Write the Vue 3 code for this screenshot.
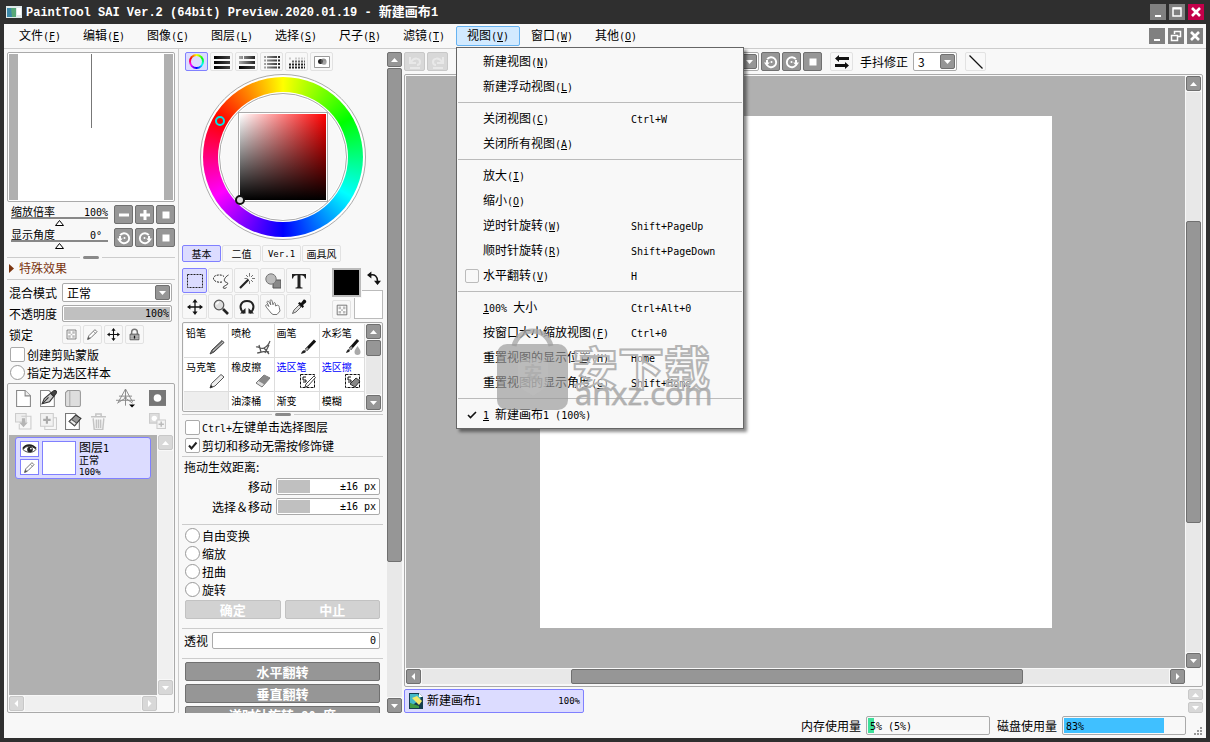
<script setup>
import { h } from 'vue'

/* Mixed text: Latin runs get a half-width face, "_X" marks an underlined mnemonic. */
const T = (props) => {
  const parts = props.t.split(/([\x20-\x7e°]+)/).filter(Boolean)
  return h('span', { class: 'tx' }, parts.map((p) => {
    if (!/^[\x20-\x7e°]/.test(p)) return p
    const bits = p.split(/(_.)/).filter(Boolean)
    return h('span', { class: 'la' }, bits.map((b) => (b[0] === '_' ? h('u', b[1]) : b)))
  }))
}
T.props = ['t']

const arrows = {
  up: '<path d="M4 10h7L7.500 6z" fill="#fff"/>',
  down: '<path d="M4 6h7L7.500 10z" fill="#fff"/>',
  left: '<path d="M9 4v7L5.500 7.500z" fill="#fff"/>',
  right: '<path d="M6 4v7l3.500-3.500z" fill="#fff"/>',
}

const checker = '<path d="M2.500 2.500h11v11h-11z" fill="#fff" stroke="#666"/><path d="M4 4h3v3H4zM9 4h3v3H9zM7 7h2v2H7zM4 9h3v3H4zM9 9h3v3H9z" fill="#bbb"/>'
const pencil = '<path d="M2 14l1.500-4.500L11 2l2.500 2.500L6 12z" fill="#fff" stroke="#555"/><path d="M2 14l1-3 2 2zM9 4l3 3" fill="#333" stroke="#777" stroke-width=".8"/>'
const move = '<path d="M8 2v12M2 8h12" stroke="#111" stroke-width="1.300"/><path d="M8 0l2.600 3.400H5.400zM8 16l2.600-3.400H5.400zM0 8l3.400-2.600v5.200zM16 8l-3.400-2.600v5.200z" fill="#111"/>'
const icons = {
  minus: '<path d="M3 6.500h10v3H3z" fill="#fff"/>',
  plus: '<path d="M3 6.500h10v3H3zM6.500 3h3v10h-3z" fill="#fff"/>',
  stop: '<path d="M4.500 4.500h7v7h-7z" fill="#fff"/>',
  ccw: '<path d="M4.200 5.200A5 5 0 1 1 4 11" fill="none" stroke="#fff" stroke-width="1.900"/><path d="M1 8.500h5.800L3.500 12z M3 8.500V6h2v3z" fill="#fff"/><circle cx="8.500" cy="8" r="1" fill="#fff"/>',
  cw: '<path d="M11.800 5.200A5 5 0 1 0 12 11" fill="none" stroke="#fff" stroke-width="1.900"/><path d="M15 8.500H9.200l3.300 3.500z M13 8.500V6h-2v3z" fill="#fff"/><circle cx="7.500" cy="8" r="1" fill="#fff"/>',
  undo: '<path d="M3 3v6h6M4 8c3-5 9-4 9 0 0 2-1.500 3-3 3M3 14h10" fill="none" stroke="#e8e8e8" stroke-width="2"/>',
  redo: '<path d="M13 3v6H7M12 8c-3-5-9-4-9 0 0 2 1.500 3 3 3M3 14h10" fill="none" stroke="#e8e8e8" stroke-width="2"/>',
  swapH: '<path d="M1 4.500L5 1v2h10v3H5v2zM15 11.500L11 8v2H1v3h10v2z" fill="#111"/>',
  line: '<path d="M1.500 1.500l13 13" stroke="#111" stroke-width="1.300"/>',
  checker, pencil, move,
  lock: '<path d="M4.500 8V5a3.500 3.500 0 0 1 7 0v3" fill="none" stroke="#777" stroke-width="1.800"/><path d="M2.500 7.500h11v7h-11z" fill="#999" stroke="#555"/><path d="M3 10h10M3 12.500h10" stroke="#ccc"/><path d="M7.200 9.500h1.600v3.500H7.200z" fill="#111"/>',
  bars: '<path d="M0 2h16v3H0zM0 7h16v3H0zM0 12h16v3H0z" fill="url(#gk)"/>',
  bars2: '<path d="M0 2h4v3H0zM5 2h11v3H5z" fill="url(#gl)"/><path d="M0 7h16v3H0z" fill="url(#gl)"/><path d="M0 12h16v3H0z" fill="url(#gk)"/>',
  bars3: '<path d="M0 2h2v2H0zM3 2h10v2H3zM14 2h2v2h-2zM0 5.500h2v2H0zM3 5.500h10v2H3zM14 5.500h2v2h-2zM0 9h2v2H0zM3 9h10v2H3zM14 9h2v2h-2zM0 12.500h2v2H0zM3 12.500h10v2H3zM14 12.500h2v2h-2z" fill="url(#gl)"/>',
  dots: '<path d="M0 13.500h17M0 10.500h17" stroke="#222" stroke-width="2" stroke-dasharray="2 1"/><path d="M3 7.500h14" stroke="#666" stroke-width="2" stroke-dasharray="2 1"/><path d="M6 4.500h11M0 4.500h2" stroke="#ccc" stroke-width="2" stroke-dasharray="2 1"/>',
  blob: '<path d="M.5 2.500h15v11H.500z" fill="#fff" stroke="#999"/><circle cx="6.500" cy="7.500" r="2.500" fill="#222"/><circle cx="9.500" cy="7.500" r="3" fill="#666" opacity=".7"/><circle cx="10.500" cy="9" r="2" fill="#aaa" opacity=".7"/>',
  marquee: '<path d="M.5 1.500h15v13H.500z" fill="none" stroke="#222" stroke-dasharray="2 1"/>',
  lasso: '<path d="M9 9C4 10 0 7.500.500 5 1 1.500 9 1 11 3.500" fill="none" stroke="#222" stroke-dasharray="2 1"/><path d="M15.500 2c-2 1-5 4-4 6s4 1 3 3-3 1-4 3 2 1.500 3 .5" fill="none" stroke="#333"/>',
  wand: '<path d="M1 15L9.500 6.500" stroke="#222" stroke-width="2.200"/><path d="M10.500 0v3.500M10.500 8v3M5.500 5.500h3M13 5.500h3M7 2l2 2M14 2l-2 2M14 9l-2-2" stroke="#777"/>',
  shapes: '<path d="M8 7h8v8H8z" fill="#888" stroke="#555"/><circle cx="6" cy="6" r="5.200" fill="#bbb" stroke="#777"/>',
  type: '<path d="M1 1h14v4.500h-1C13.500 3 12.500 2.200 9.500 2.200v11c0 1 .8 1.300 2 1.300v1h-7v-1c1.200 0 2-.3 2-1.300v-11C3.500 2.200 2.500 3 2 5.500H1z" fill="#222"/>',
  zoom: '<path d="M10 10l5 5" stroke="#222" stroke-width="2.600"/><circle cx="6" cy="6" r="4.800" fill="#ddd" stroke="#555" stroke-width="1.200"/><path d="M3.500 5.500A3 3 0 0 1 6 3.200" stroke="#fff" stroke-width="1.400" fill="none"/>',
  rotate: '<path d="M5 14C-1 9 1.500 2 8 2s9 7 3 12" fill="none" stroke="#222" stroke-width="2"/><path d="M1 14.500h5.500V9zM15 14.500H9.500V9z" fill="#222"/>',
  hand: '<path d="M6 14C4 11 1 8.500.500 6.500c.5-1.500 2-.5 3.500 1L2 3.500C1.700 2 3.300 1.700 4 3l1.800 3L5 1.800C5 .5 6.800.500 7 1.800l1 4 .5-1.600c.6-1.200 2-.6 1.800.6L10.500 7l1.800-.8c1-.2 2 .8 2 2.300L15 12l-3 3.500H8z" fill="#fff" stroke="#777"/>',
  dropper: '<path d="M1.500 14.500L3 11l5-5 2 2-5 5z" fill="#ddd" stroke="#666"/><path d="M7 4.500L8.500 3l1.500 1L12.500.800c1.200-1 3.500 1 2.500 2.700L12 6l1 1.500L11.500 9z" fill="#111"/>',
  swap: '<path d="M4 4.500c5-1 8 2 8 7" fill="none" stroke="#111" stroke-width="1.800"/><path d="M0 4.500L5 .5v8zM12 16L8 11h8z" fill="#111"/>',
  bPencil: '<path d="M1 15l2-4L13 1.500l2 2L5 13z" fill="#777" stroke="#444"/><path d="M4 12l10-9" stroke="#ccc"/>',
  bAir: '<path d="M1 8c4-1 4 3 8 1s5-4 6-7M4 6l2 7M2 14c4 0 7-3 12-1M9 9l5 6M10 14l4-8" stroke="#555" fill="none" stroke-width="1.200"/>',
  bBrush: '<path d="M1 15c1-3 2-4 4-4l1 1c0 2-3 2.500-5 3z" fill="#222"/><path d="M6 11L15 1.500" stroke="#111" stroke-width="3"/><path d="M5 12l3-3" stroke="#999" stroke-width="2"/>',
  bWater: '<path d="M1 14c1-3 2-4 3-4l1 1c0 2-2 2.500-4 3z" fill="#222"/><path d="M5 10l8-9" stroke="#111" stroke-width="3"/><path d="M4 11l3-3" stroke="#999" stroke-width="2"/><path d="M12.500 7c2 3 3 4 3 6a3 3 0 0 1-6 0c0-2 1-3 3-6z" fill="#aaa"/>',
  bMarker: '<path d="M1 15l1.500-4.500L12 1.500l3 2.500L6 13z" fill="#eee" stroke="#555"/><path d="M1 15l1-3 2 2z" fill="#222"/>',
  bEraser: '<path d="M1 10l8-8 6 3-8 9z" fill="#ddd" stroke="#777"/><path d="M3.500 8L9 2l6 3-5.500 6.500z" fill="#888"/>',
  bSelPen: '<path d="M.5 1.500h14v13H.500z" fill="none" stroke="#111" stroke-dasharray="3 1"/><path d="M6 4H3v3h3v2H3" fill="none" stroke="#111"/><path d="M5 14l1-3 8-8 1.500 1.500L8 13z" fill="#fff" stroke="#444"/>',
  bSelEr: '<path d="M.5 1.500h14v13H.500z" fill="none" stroke="#111" stroke-dasharray="3 1"/><path d="M6 4H3v3h3v2H3" fill="none" stroke="#111"/><path d="M5 11l6-6 4 3-5 6z" fill="#888" stroke="#333"/>',
  page: '<path d="M1.500.500h8l5 5v10h-13z" fill="#fff" stroke="#888"/><path d="M9.500.500v5h5" fill="#eee" stroke="#888"/>',
  pagePen: '<path d="M.5.500h8l5 5v10H.500z" fill="#fff" stroke="#888"/><path d="M2 13l2-5 6-5 3 3-4 5z" fill="#ccc" stroke="#333"/><path d="M2.500 12.500L8 7M10 3l4-3 2 2-3 4z" fill="#444" stroke="#333"/>',
  folder: '<path d="M.5 2.500l2-2h10.500a1.500 1.500 0 0 1 1.500 1.500v12a1.500 1.500 0 0 1-1.500 1.500H2a1.500 1.500 0 0 1-1.500-1.500z" fill="#ddd" stroke="#999"/><path d="M4.500 1v14" stroke="#aaa"/>',
  persp: '<path d="M8 0v14M0 9.500h16M8 0L2 11M8 0l6 11M1 12l8-5M14 12L7 7M2.500 6h11" stroke="#888" stroke-width=".8" fill="none"/><path d="M11 13h5l-2.500 2.500z" fill="#000"/>',
  mask: '<path d="M0 0h16v15H0z" fill="#777"/><circle cx="8" cy="7.500" r="3.600" fill="#fff"/>',
  down: '<path d="M.5.500h10v8H.500z" fill="#eee" stroke="#ccc"/><path d="M6 3h9v12H4v-5" fill="none" stroke="#ccc"/><path d="M6.500 5h3v4H12l-4 4.500L4 9h2.500z" fill="#b5b5b5"/>',
  addSel: '<path d="M4.500 4.500h11v11h-11z" fill="none" stroke="#ccc"/><path d="M.500.500h12v12H.500z" fill="#f2f2f2" stroke="#ccc"/><path d="M6.500 3v7M3 6.500h7" stroke="#aaa" stroke-width="2"/>',
  pageEr: '<path d="M.5.500h9l4 4v11H.500z" fill="#fff" stroke="#777"/><path d="M4 8l6-6 5 3-6 7z" fill="#999" stroke="#333"/><path d="M4 8l2-2 5 3.500-2 2.500z" fill="#eee" stroke="#555"/>',
  trash: '<path d="M1 3.500h14M5.500 3V1h5v2M3 5l1 10.500h8L13 5M6 6v8M8 6v8M10 6v8" fill="none" stroke="#c4c4c4" stroke-width="1.400"/>',
  addMask: '<path d="M.5.500h9v9H.500z" fill="#ddd" stroke="#ccc"/><circle cx="5" cy="5" r="2.500" fill="#fff"/><path d="M7.500 6.500h8v8h-8z" fill="#f4f4f4" stroke="#ccc"/><path d="M11.500 8v5M9 10.500h5" stroke="#bbb" stroke-width="1.400"/>',
  eye: '<path d="M1 8c3-4.500 10-4.500 14 0-3 4-10 4-14 0z" fill="#fff" stroke="#333"/><path d="M1 7c3-5 10-5 14 0" fill="none" stroke="#222" stroke-width="1.800"/><circle cx="8.500" cy="8" r="3" fill="#222"/><circle cx="9.500" cy="7" r=".9" fill="#fff"/>',
  app: '<path d="M0 2h16v12H0z" fill="#dfe9ea"/><path d="M1 4h9v9H1z" fill="#3b88a8"/><path d="M5 4h5v9H6z" fill="#58a878"/><path d="M11 4h4v7h-4z" fill="#fff"/>',
  doc: '<path d="M1 0h10l4 4v12H1z" fill="#143c50"/><path d="M2 1h8l3 4-8 7-3-2z" fill="#45b9c8"/><path d="M4 5l5-2 5 5-3 4z" fill="#f3e96a"/><path d="M2 10l9 3v2H2z" fill="#3f9a45"/><path d="M11 0v4h4z" fill="#fff"/>',
  wmin: '<path d="M5 11h6v2H5z" fill="#fff"/>',
  wmax: '<path d="M4 4h8v8H4z" fill="none" stroke="#fff" stroke-width="1.500"/><path d="M4 3.500h8v2H4z" fill="#fff"/>',
  wres: '<path d="M6.500 6V3.500h6v5H10" fill="none" stroke="#fff" stroke-width="1.500"/><path d="M3.500 7.500h6v5h-6z" fill="none" stroke="#fff" stroke-width="1.500"/>',
  wclose: '<path d="M4 4l8 8M12 4l-8 8" stroke="#fff" stroke-width="2.600"/>',
}
const Ico = (props) => h('svg', {
  class: 'ico', viewBox: '0 0 16 16', width: props.s || 16, height: props.s || 16, 'aria-hidden': 'true', innerHTML: icons[props.n],
})
Ico.props = ['n', 's']

const Arrow = (props) => h('svg', { class: 'ico', viewBox: '0 0 15 15', width: 15, height: 15, 'aria-hidden': 'true', innerHTML: arrows[props.d] })
Arrow.props = ['d']

const Scroll = (props) => {
  const v = props.dir === 'v'
  const thumb = props.size
    ? h('div', { class: 'sb-thumb', style: v ? { top: props.at + '%', height: props.size + '%' } : { left: props.at + '%', width: props.size + '%' } })
    : null
  return h('div', { class: ['sb', v ? 'sb-v' : 'sb-h', { 'sb-off': !props.size }] }, [
    h('button', { class: 'sb-btn', type: 'button', 'aria-label': v ? '上' : '左' }, h(Arrow, { d: v ? 'up' : 'left' })),
    h('div', { class: 'sb-track' }, thumb),
    h('button', { class: 'sb-btn', type: 'button', 'aria-label': v ? '下' : '右' }, h(Arrow, { d: v ? 'down' : 'right' })),
  ])
}
Scroll.props = ['dir', 'at', 'size']

const menus = ['文件(_F)', '编辑(_E)', '图像(_C)', '图层(_L)', '选择(_S)', '尺子(_R)', '滤镜(_T)', '视图(_V)', '窗口(_W)', '其他(_O)']
const groups = [
  [{ t: '新建视图(_N)' }, { t: '新建浮动视图(_L)' }],
  [{ t: '关闭视图(_C)', k: 'Ctrl+W' }, { t: '关闭所有视图(_A)' }],
  [{ t: '放大(_I)' }, { t: '缩小(_O)' }, { t: '逆时针旋转(_W)', k: 'Shift+PageUp' }, { t: '顺时针旋转(_R)', k: 'Shift+PageDown' }, { t: '水平翻转(_V)', k: 'H', box: true }],
  [{ t: '_100% 大小', k: 'Ctrl+Alt+0' }, { t: '按窗口大小缩放视图(_F)', k: 'Ctrl+0' }, { t: '重置视图的显示位置(_H)', k: 'Home' }, { t: '重置视图的显示角度(_G)', k: 'Shift+Home' }],
  [{ t: '_1 新建画布1 (100%)', check: true }],
]
const sliders = [
  { id: 'zoom', t: '缩放倍率', v: '100%', b: ['minus', 'plus', 'stop'] },
  { id: 'angle', t: '显示角度', v: '0° ', b: ['ccw', 'cw', 'stop'] },
]
const modes = ['bars', 'bars2', 'bars3', 'dots', 'blob']
const tabs = ['基本', '二值', 'Ver.1', '画具风']
const tools = ['marquee', 'lasso', 'wand', 'shapes', 'type', 'move', 'zoom', 'rotate', 'hand', 'dropper']
const brushes = [
  ['铅笔', 'bPencil'], ['喷枪', 'bAir'], ['画笔', 'bBrush'], ['水彩笔', 'bWater'],
  ['马克笔', 'bMarker'], ['橡皮擦', 'bEraser'], ['选区笔', 'bSelPen', 1], ['选区擦', 'bSelEr', 1],
  ['', ''], ['油漆桶', ''], ['渐变', ''], ['模糊', ''],
]
const transforms = ['自由变换', '缩放', '扭曲', '旋转']
</script>

<template>
  <div class="window">
    <svg class="defs" width="0" height="0" aria-hidden="true">
      <linearGradient id="gk"><stop offset="0" stop-color="#000" /><stop offset="1" stop-color="#444" /></linearGradient>
      <linearGradient id="gl"><stop offset="0" stop-color="#aaa" /><stop offset="1" stop-color="#222" /></linearGradient>
    </svg>
    <header class="title">
      <Ico n="app" />
      <h1><T t="PaintTool SAI Ver.2 (64bit) Preview.2020.01.19 - 新建画布1" /></h1>
      <div class="wbtns">
        <button type="button" aria-label="最小化"><Ico n="wmin" /></button>
        <button type="button" aria-label="最大化"><Ico n="wmax" /></button>
        <button type="button" class="red" aria-label="关闭"><Ico n="wclose" /></button>
      </div>
    </header>

    <div class="app">
      <nav class="menubar">
        <div v-for="m in menus" :key="m" class="mwrap">
          <button type="button" class="mitem" :class="{ open: m === '视图(_V)' }"><T :t="m" /></button>
          <div v-if="m === '视图(_V)'" class="menu" role="menu">
            <div v-for="(g, i) in groups" :key="i" class="group">
              <button v-for="it in g" :key="it.t" type="button" class="row" role="menuitem">
                <span class="mark">
                  <span v-if="it.box" class="mbox"></span>
                  <svg v-if="it.check" width="10" height="8" viewBox="0 0 10 8"><path d="M1 4l2.500 2.500L9 1" fill="none" stroke="#111" stroke-width="1.600" /></svg>
                </span>
                <T class="mtext" :t="it.t" />
                <T v-if="it.k" :t="it.k" />
              </button>
            </div>
            <svg class="wm" width="216" height="84" viewBox="0 0 216 84" aria-hidden="true">
              <path d="M17 18C22-2 49-2 54 18" fill="none" stroke="#a9a9a9" stroke-width="5" opacity=".8" />
              <rect x="0" y="16" width="71" height="66" rx="10" fill="#999" opacity=".68" />
              <path d="M21 34l15-4 15 4v22c-3 6-10 8-15 12-5-4-12-6-15-12z" fill="#bcbcbc" opacity=".6" />
              <text x="27" y="52" class="wm-s">安</text>
              <text x="75" y="57" class="wm-b">安下载</text>
              <text x="78" y="77" class="wm-l">anxz.com</text>
            </svg>
          </div>
        </div>
        <div class="wbtns sub">
          <button type="button" aria-label="最小化视图"><Ico n="wmin" /></button>
          <button type="button" aria-label="还原视图"><Ico n="wres" /></button>
          <button type="button" aria-label="关闭视图"><Ico n="wclose" /></button>
        </div>
      </nav>

      <div class="work">
        <aside class="left">
          <div class="preview"><div class="sheet"><i></i></div></div>
          <div class="sliders">
            <div v-for="s in sliders" :key="s.id" class="srow">
              <div class="slider">
                <label :for="s.id"><span>{{ s.t }}</span><T :t="s.v" /></label>
                <input :id="s.id" type="range" value="50" />
              </div>
              <button v-for="b in s.b" :key="b" type="button" class="gbtn" :aria-label="s.t + b"><Ico :n="b" /></button>
            </div>
          </div>
          <div class="split"><i></i></div>
          <h2 class="fx"><svg width="5" height="9" viewBox="0 0 5 9"><path d="M0 0l5 4.500L0 9z" fill="#7b3510" /></svg>特殊效果</h2>
          <div class="props">
            <label for="mode">混合模式</label>
            <span class="combo"><select id="mode"><option>正常</option></select><span class="cb"><Arrow d="down" /></span></span>
            <label for="opacity">不透明度</label>
            <input id="opacity" class="field full" value="100%" />
            <span>锁定</span>
            <div class="locks">
              <button v-for="l in ['checker', 'pencil', 'move', 'lock']" :key="l" type="button" class="tbtn" :aria-label="l"><Ico :n="l" s="13" /></button>
            </div>
          </div>
          <label class="opt"><input type="checkbox" />创建剪贴蒙版</label>
          <label class="opt"><input type="radio" name="sample" />指定为选区样本</label>
          <section class="layers">
            <div class="ltools">
              <button v-for="(l, i) in ['page', 'pagePen', 'folder', '', 'persp', 'mask', 'down', 'addSel', 'pageEr', 'trash', '', 'addMask']" :key="i" type="button" :class="'l-' + l" :aria-label="l || '空'" :disabled="!l">
                <Ico v-if="l" :n="l" :s="l === 'persp' ? 19 : 17" />
              </button>
            </div>
            <div class="lbody">
              <div class="list">
                <div class="layer">
                  <div class="eyes">
                    <button type="button" aria-label="显示"><Ico n="eye" s="15" /></button>
                    <button type="button" aria-label="编辑"><Ico n="pencil" s="13" /></button>
                  </div>
                  <div class="thumb"></div>
                  <div class="linfo"><strong><T t="图层1" /></strong><span>正常</span><span><T t="100%" /></span></div>
                </div>
              </div>
              <Scroll dir="v" />
              <Scroll dir="h" />
            </div>
          </section>
        </aside>

        <aside class="mid">
          <div class="panel">
            <div class="modes">
              <button type="button" class="tbtn on" aria-label="色轮"><span class="hue"></span></button>
              <button v-for="m in modes" :key="m" type="button" class="tbtn" :aria-label="m"><Ico :n="m" /></button>
            </div>
            <div class="wheel">
              <div class="ring"></div>
              <div class="hole"></div>
              <div class="sq"></div>
              <i class="pick hp"></i><i class="pick sp"></i>
            </div>
            <div class="tabs">
              <button v-for="(t, i) in tabs" :key="t" type="button" class="tbtn" :class="{ on: !i }"><T :t="t" /></button>
            </div>
            <div class="toolrow">
              <div class="tools">
                <button v-for="(t, i) in tools" :key="t" type="button" class="tbtn" :class="{ on: !i }" :aria-label="t"><Ico :n="t" /></button>
              </div>
              <div class="colors">
                <i class="sw bg"></i><i class="sw fg"></i>
                <button type="button" class="swap" aria-label="交换"><Ico n="swap" s="14" /></button>
                <button type="button" class="tbtn clear" aria-label="透明"><Ico n="checker" s="14" /></button>
              </div>
            </div>
            <div class="brushes">
              <div class="bgrid">
                <button v-for="(b, i) in brushes" :key="i" type="button" :class="{ sel: b[2], empty: !b[0] }" :aria-label="b[0] || '空'">
                  <span>{{ b[0] }}</span><Ico v-if="b[1]" :n="b[1]" />
                </button>
              </div>
              <Scroll dir="v" :at="0" :size="30" />
            </div>
            <div class="split low"><i></i></div>
            <label class="opt"><input type="checkbox" /><T t="Ctrl+左键单击选择图层" /></label>
            <label class="opt"><input type="checkbox" checked />剪切和移动无需按修饰键</label>
            <div class="drag">
              <p>拖动生效距离:</p>
              <div><label for="d1">移动</label><input id="d1" class="field part" value="±16 px" /></div>
              <div><label for="d2">选择＆移动</label><input id="d2" class="field part" value="±16 px" /></div>
            </div>
            <div class="sect">
              <label v-for="t in transforms" :key="t" class="opt"><input type="radio" name="tf" />{{ t }}</label>
              <div class="pair">
                <button type="button" class="wide off" disabled>确定</button>
                <button type="button" class="wide off" disabled>中止</button>
              </div>
            </div>
            <div class="sect pers"><label for="pers">透视</label><input id="pers" class="field" value="0" /></div>
            <div class="sect flips">
              <button type="button" class="wide">水平翻转</button>
              <button type="button" class="wide">垂直翻转</button>
              <button type="button" class="wide"><T t="逆时针旋转 90 度" /></button>
            </div>
          </div>
          <Scroll dir="v" :at="0" :size="78.6" />
        </aside>

        <main class="right">
          <div class="toolbar">
            <button type="button" class="gbtn off" aria-label="撤销"><Ico n="undo" /></button>
            <button type="button" class="gbtn off" aria-label="重做"><Ico n="redo" /></button>
            <span class="combo view"><select aria-label="角度"></select><span class="cb"><Arrow d="down" /></span></span>
            <button type="button" class="gbtn" aria-label="逆时针旋转"><Ico n="ccw" /></button>
            <button type="button" class="gbtn" aria-label="顺时针旋转"><Ico n="cw" /></button>
            <button type="button" class="gbtn" aria-label="重置"><Ico n="stop" /></button>
            <button type="button" class="tbtn flip" aria-label="翻转"><Ico n="swapH" /></button>
            <label for="stab">手抖修正</label>
            <span class="combo stab"><select id="stab"><option>3</option></select><span class="cb"><Arrow d="down" /></span></span>
            <button type="button" class="tbtn ln" aria-label="直线"><Ico n="line" /></button>
          </div>
          <div class="view">
            <div class="desk"><div class="canvas"></div></div>
            <Scroll dir="v" :at="23" :size="54" />
            <Scroll dir="h" :at="20" :size="60.4" />
          </div>
          <div class="docs">
            <button type="button" class="doc"><Ico n="doc" /><T t="新建画布1" /><span class="pc">100%</span></button>
            <div class="mini">
              <button type="button" aria-label="上一个"><Arrow d="up" /></button>
              <button type="button" aria-label="下一个"><Arrow d="down" /></button>
            </div>
          </div>
        </main>
      </div>

      <footer class="status">
        <span>内存使用量</span>
        <div class="meter"><i class="mem" :style="{ width: '5%' }"></i><T t="5% (5%)" /></div>
        <span>磁盘使用量</span>
        <div class="meter"><i class="disk" :style="{ width: '82%' }"></i><T t="83%" /></div>
        <svg class="grip" width="9" height="9" viewBox="0 0 9 9"><path d="M6 0h2v2H6zM3 3h2v2H3zM6 3h2v2H6zM0 6h2v2H0zM3 6h2v2H3zM6 6h2v2H6z" fill="#999" /></svg>
      </footer>
    </div>
  </div>
</template>

<style scoped>
.window { height: 100vh; display: flex; flex-direction: column; padding: 0 4px 4px; background: #2f2f2f; box-sizing: border-box; overflow: hidden; }
.defs { position: absolute; }
.title { height: 24px; flex: none; display: flex; align-items: center; gap: 4px; padding: 0 2px; color: #fff; }
.title h1 { flex: 1; font-size: 13px; line-height: 24px; margin: 0; font-weight: 700; }
.title h1 :deep(.la) { font: 700 12px/24px "Liberation Mono", monospace; }
.wbtns { display: flex; gap: 3px; margin-left: auto; }
.wbtns button { width: 16px; height: 16px; background: #808080; }
.wbtns .red { background: #c4004a; }
.wbtns.sub { padding-right: 3px; align-self: center; }
.app { flex: 1; min-height: 0; display: flex; flex-direction: column; background: #f8f8f8; }

.menubar { height: 24px; flex: none; display: flex; border-bottom: 1px solid #ccc; padding-left: 4px; }
.mwrap { position: relative; padding-top: 2px; }
.mitem { width: 64px; height: 20px; border: 1px solid transparent; border-radius: 2px; }
.mitem.open { background: #d2eaff; border-color: #66b3f2; }
.menu { position: absolute; z-index: 5; left: 0; top: 23px; width: 286px; padding: 1px 0; background: #f8f8f8; border: 1px solid #666; box-shadow: 3px 3px 3px rgba(0, 0, 0, .45); }
.group + .group { border-top: 1px solid #bbb; margin: 3px 1px 0; padding-top: 3px; }
.row { width: 100%; height: 25px; justify-content: flex-start; }
.group + .group .row { margin-left: -1px; }
.mark { width: 26px; height: 14px; display: flex; align-items: center; justify-content: center; flex: none; }
.mbox { width: 12px; height: 12px; border: 1px solid #bbb; border-radius: 2px; margin-left: 4px; }
.mark svg { margin-left: 4px; }
.mtext { width: 148px; white-space: nowrap; text-align: left; flex: none; }
.wm { position: absolute; left: 40px; top: 280px; pointer-events: none; }
.wm text { font-family: "Noto Sans CJK SC", sans-serif; }
.wm .wm-s { font-size: 18px; font-weight: 700; fill: #aaa; opacity: .7; }
.wm .wm-b { font-size: 46px; font-weight: 700; fill: #f8f8f8; fill-opacity: .5; stroke: #b4b4b4; stroke-width: 2; }
.wm .wm-l { font-family: "Open Sans", sans-serif; font-size: 31px; fill: #a8a8a8; fill-opacity: .85; stroke: #a8a8a8; stroke-opacity: .6; }

.work { flex: 1; min-height: 0; display: flex; overflow: hidden; }
.left { width: 168px; flex: none; padding: 3px 3px 0; border-right: 1px solid #ccc; display: flex; flex-direction: column; }
.preview { height: 146px; flex: none; border: 1px solid #aaa; border-radius: 2px; padding: 1px; background: #fff; }
.sheet { height: 100%; border: solid #b0b0b0; border-width: 0 9px; }
.sheet i { display: block; width: 1px; height: 74px; margin: 0 auto; background: #777; }
.sliders { display: flex; flex-direction: column; gap: 4px; margin-top: 3px; padding-left: 4px; }
.srow { display: flex; gap: 2px; height: 19px; }
.slider { width: 97px; margin-right: 4px; }
.slider label { display: flex; justify-content: space-between; font-size: 11px; line-height: 12px; height: 12px; }
.slider input { display: block; appearance: none; width: 100%; height: 9px; margin: 0; background: linear-gradient(#888, #888) 0 0 / 100% 2px no-repeat; }
.slider input::-webkit-slider-thumb { appearance: none; width: 11px; height: 7px; margin-top: 2px; background: url("data:image/svg+xml,%3Csvg xmlns='http://www.w3.org/2000/svg' width='11' height='7'%3E%3Cpath d='M1.500 6.500h8L5.500 1.500z' fill='%23fff' stroke='%23000'/%3E%3C/svg%3E"); }
.gbtn { width: 19px; height: 19px; flex: none; background: #969696; border: 1px solid #707070; border-radius: 2px; }
.split { height: 6px; margin-top: 7px; display: flex; align-items: center; gap: 2px; flex: none; }
.split::before, .split::after { content: ""; flex: 1; height: 1px; background: #ccc; }
.split i { width: 16px; height: 3px; border-radius: 2px; background: #8a8a8a; margin: 0 1px; }
.split.low { height: 5px; margin-top: 0; }
.fx { margin: 0 0 3px; padding: 0 0 3px 2px; font-size: 12px; font-weight: 400; line-height: 16px; color: #7b3510; border-bottom: 1px solid #ccc; display: flex; align-items: center; gap: 5px; }
.props { display: grid; grid-template-columns: 51px 110px; gap: 3px 2px; align-items: center; padding-left: 2px; line-height: 16px; }
.combo { display: flex; position: relative; height: 19px; background: #fff; border: 1px solid #aaa; border-radius: 2px; box-sizing: border-box; }
.combo select { appearance: none; border: 0; background: none; width: 100%; padding: 0 18px 0 4px; font: 12px/15px "Noto Sans CJK SC", sans-serif; color: #000; }
.cb { position: absolute; right: 1px; top: 1px; width: 15px; height: 15px; background: #969696; border: 1px solid #707070; border-radius: 2px; box-sizing: border-box; pointer-events: none; display: flex; align-items: center; justify-content: center; }
.field { box-sizing: border-box; width: 100%; height: 17px; margin: 0; border: 1px solid #aaa; border-radius: 2px; padding: 0 3px; text-align: right; font: 10px/14px "DejaVu Sans Mono", monospace; background: #fff; color: #000; }
.field.full { background: #c0c0c0; box-shadow: inset 0 0 0 1px #fff; padding: 0 2px; }
.field.part { background: linear-gradient(#c0c0c0, #c0c0c0) 1px 1px / 32px 13px no-repeat #fff; }
.locks { display: flex; gap: 2px; }
.locks .tbtn { width: 19px; height: 19px; }
.tbtn { background: #f8f8f8; border: 1px solid #e2e2e2; border-radius: 2px; flex: none; }
.tbtn.on { background: #dcdcff; border-color: #8080ff; }
.opt { display: flex; align-items: center; gap: 2px; height: 15px; line-height: 15px; margin: 3px 0 0 3px; white-space: nowrap; }
.opt input { appearance: none; width: 15px; height: 15px; margin: 0; background: #fff; border: 1px solid #aaa; border-radius: 2px; flex: none; box-sizing: border-box; }
.opt input[type=radio] { border-radius: 50%; border-color: #999; }
.opt input:checked { background: url("data:image/svg+xml,%3Csvg xmlns='http://www.w3.org/2000/svg' width='13' height='13'%3E%3Cpath d='M3 6.500l2.500 3L10.500 3.500' fill='none' stroke='%23222' stroke-width='2'/%3E%3C/svg%3E") #fff; }
.layers { flex: 1; min-height: 0; margin-top: 3px; border: 1px solid #aaa; border-radius: 2px; padding: 1px; display: flex; flex-direction: column; }
.ltools { height: 50px; flex: none; display: grid; grid-template-columns: 25px 25px 25px 25px 29px 1fr; grid-template-rows: 23px 23px; padding: 2px 3px 2px 2px; box-sizing: border-box; align-items: center; }
.l-mask, .l-addMask { justify-content: flex-end; padding-right: 4px; }
.lbody { flex: 1; min-height: 0; display: grid; grid-template: 1fr 16px / 1fr 16px; }
.list { background: #b0b0b0; padding: 2px 6px; }
.layer { height: 42px; box-sizing: border-box; border: 1px solid #8080ff; border-radius: 3px; background: #dcdcff; display: flex; gap: 3px; padding: 3px 4px; }
.eyes { display: flex; flex-direction: column; gap: 2px; }
.eyes button { width: 19px; height: 16px; background: #fff; border: 1px solid #8080ff; }
.thumb { width: 34px; height: 34px; box-sizing: border-box; background: #fff; border: 1px solid #8080ff; }
.linfo { display: flex; flex-direction: column; font-size: 10px; line-height: 11px; }
.linfo strong { font-size: 12px; font-weight: 400; line-height: 12px; }
.linfo :deep(.la) { font-size: 9px; line-height: 11px; }
.linfo strong :deep(.la) { font-size: 10px; }

.mid { width: 220px; flex: none; padding: 3px 2px 0 3px; display: flex; gap: 3px; overflow: hidden; }
.panel { width: 201px; overflow: hidden; }
.modes { display: flex; gap: 2px; padding-left: 3px; height: 19px; }
.modes .tbtn { width: 23px; height: 19px; }
.hue { width: 11px; height: 11px; border-radius: 50%; border: 2px solid transparent; background: linear-gradient(#dcdcff, #dcdcff) padding-box, conic-gradient(#ff0, #0f0, #0ff, #00f, #f0f, #f00, #ff0) border-box; }
.wheel { position: relative; width: 166px; height: 166px; margin: 3px auto 5px; border-radius: 50%; box-sizing: border-box; border: 1px solid #aaa; background: #fff; }
.ring { position: absolute; inset: 2px; border-radius: 50%; background: conic-gradient(#ff0, #0f0 60deg, #0ff 120deg, #00f 180deg, #f0f 240deg, #f00 300deg, #ff0); }
.hole { position: absolute; inset: 18px; border-radius: 50%; background: #f8f8f8; border: 1px solid #aaa; box-shadow: 0 0 0 1px #fff, inset 0 0 0 1px #fff; }
.sq { position: absolute; left: 38px; top: 38px; width: 86px; height: 86px; border: 1px solid #fff; outline: 1px solid #aaa; background: linear-gradient(to top, #000, transparent), linear-gradient(to right, #fff, #f00); }
.pick { position: absolute; width: 6px; height: 6px; border-radius: 50%; border: 2px solid #00e5e5; }
.hp { left: 14px; top: 41px; }
.sp { left: 34px; top: 120px; border-color: #111; background: #ddd; }
.tabs { display: flex; gap: 1px; }
.tabs .tbtn { width: 39px; height: 17px; font-size: 10px; line-height: 14px; white-space: nowrap; }
.tabs :deep(.la) { font-size: 9px; }
.toolrow { display: flex; justify-content: space-between; margin-top: 6px; }
.tools { display: grid; grid-template-columns: repeat(5, 25px); gap: 1px; }
.tools .tbtn { height: 25px; }
.colors { position: relative; width: 51px; height: 51px; }
.sw { position: absolute; width: 25px; height: 25px; border: 2px solid #bbb; box-sizing: content-box; }
.fg { left: 0; top: 0; background: #000; outline: 1px solid #f8f8f8; }
.bg { right: 0; bottom: 0; background: #fff; border-width: 1px; width: 27px; height: 27px; }
.swap { position: absolute; right: 2px; top: 2px; width: 15px; height: 15px; }
.clear { position: absolute; left: 0; bottom: 0; width: 19px; height: 19px; }
.brushes { display: flex; height: 90px; box-sizing: border-box; margin-top: 3px; border: 1px solid #aaa; border-radius: 2px; padding: 1px; background: #f8f8f8; }
.bgrid { flex: 1; display: grid; grid-template-columns: repeat(4, 1fr); grid-auto-rows: 34px; overflow: hidden; }
.bgrid button { position: relative; background: #fff; border: solid #ddd; border-width: 0 1px 1px 0; font-size: 10px; line-height: 12px; align-items: flex-start; justify-content: flex-start; padding: 3px 2px; white-space: nowrap; }
.bgrid .empty { background: #eee; }
.bgrid .sel { color: #00f; }
.bgrid button svg { position: absolute; right: 3px; bottom: 2px; }
.drag, .sect { border-top: 1px solid #ccc; margin-top: 3px; padding: 0 3px; }
.drag p { margin: 2px 0 4px -1px; line-height: 15px; }
.drag div { display: flex; justify-content: flex-end; align-items: center; gap: 4px; margin-bottom: 3px; line-height: 17px; }
.drag .part { width: 104px; }
.drag { padding-bottom: 3px; }
.sect .opt { margin-left: 0; }
.pair { display: flex; gap: 4px; margin: 3px 0 9px; }
.wide { width: 100%; height: 19px; background: #969696; border: 1px solid #707070; border-radius: 2px; color: #fff; font-weight: 700; font-size: 13px; line-height: 17px; }
.wide :deep(.la) { font-size: 12px; font-weight: 700; }
.wide.off { background: #d2d2d2; border-color: #c2c2c2; }
.pers { display: flex; align-items: center; gap: 4px; padding: 3px 3px 9px 2px; margin-top: 0; }
.pers label { white-space: nowrap; line-height: 17px; }
.flips { margin-top: 0; padding-top: 3px; display: flex; flex-direction: column; gap: 3px; }

.right { flex: 1; min-width: 0; padding: 3px 3px 0 0; display: flex; flex-direction: column; }
.toolbar { display: flex; align-items: center; gap: 2px; height: 19px; flex: none; }
.toolbar .gbtn.off { width: 21px; background: #d8d8d8; border-color: #c8c8c8; }
.toolbar .combo.view { width: 60px; margin-left: 249px; }
.toolbar .flip { width: 23px; height: 19px; margin: 0 5px 0 6px; }
.toolbar .stab { width: 44px; margin-left: 3px; }
.toolbar label { line-height: 19px; }
.toolbar .ln { width: 21px; height: 19px; margin-left: 6px; }
div.view { flex: 1; min-height: 0; margin-top: 3px; border: 1px solid #aaa; border-radius: 2px; padding: 1px; display: grid; grid-template: 1fr 17px / 1fr 16px; }
.desk { background: #b0b0b0; display: flex; align-items: center; justify-content: center; overflow: hidden; min-height: 0; }
.canvas { width: 512px; height: 512px; background: #fff; flex: none; }
.docs { display: flex; justify-content: space-between; height: 24px; margin-top: 2px; flex: none; }
.doc { width: 180px; height: 24px; background: #dcdcff; border: 1px solid #8080ff; border-radius: 2px; gap: 3px; padding: 0 3px; }
.pc { margin-left: auto; font: 9px/12px "DejaVu Sans Mono", monospace; }
.mini { display: flex; flex-direction: column; gap: 2px; }
.mini button { width: 15px; height: 11px; background: #d8d8d8; border: 1px solid #c8c8c8; border-radius: 2px; overflow: hidden; }

.status { height: 25px; flex: none; display: flex; justify-content: flex-end; align-items: center; gap: 5px; padding-right: 3px; }
.meter { position: relative; width: 124px; height: 19px; box-sizing: border-box; border: 1px solid #aaa; border-radius: 2px; padding: 1px 3px; margin-right: 2px; line-height: 15px; display: flex; align-items: center; }
.meter i { position: absolute; left: 1px; top: 1px; bottom: 1px; }
.meter .tx { position: relative; }
.mem { background: #3ee09a; }
.disk { background: #40c0ff; }
.grip { align-self: flex-end; margin: 0 0 2px 1px; }
</style>

<style>
#app { font: 12px/16px "Noto Sans CJK SC", sans-serif; color: #000; }
:where(#app button) { font: 12px/16px "Noto Sans CJK SC", sans-serif; color: #000; border: 0 solid; padding: 0; margin: 0; background: none; box-sizing: border-box; display: flex; align-items: center; justify-content: center; }
.tx { white-space: pre; }
.la { font-family: "DejaVu Sans Mono", monospace; font-size: 10px; }
.ico { display: block; flex: none; }
.sb { display: flex; min-height: 0; min-width: 0; }
.sb-v { flex-direction: column; width: 15px; margin-left: 1px; flex: none; }
.sb-h { height: 15px; margin-top: 1px; }
.sb-btn { width: 15px; height: 15px; flex: none; background: #969696; border: 1px solid #707070; border-radius: 2px; }
.sb-track { flex: 1; position: relative; margin: 1px 0; background: #e8e8e8; }
.sb-h .sb-track { margin: 0 1px; }
.sb-thumb { position: absolute; box-sizing: border-box; background: #969696; border: 1px solid #707070; border-radius: 2px; }
.sb-v .sb-thumb { left: 0; right: 0; }
.sb-h .sb-thumb { top: 0; bottom: 0; }
.sb-off .sb-btn { background: #d8d8d8; border-color: #c8c8c8; }
.sb-off .sb-track { background: #f0f0f0; }
</style>
